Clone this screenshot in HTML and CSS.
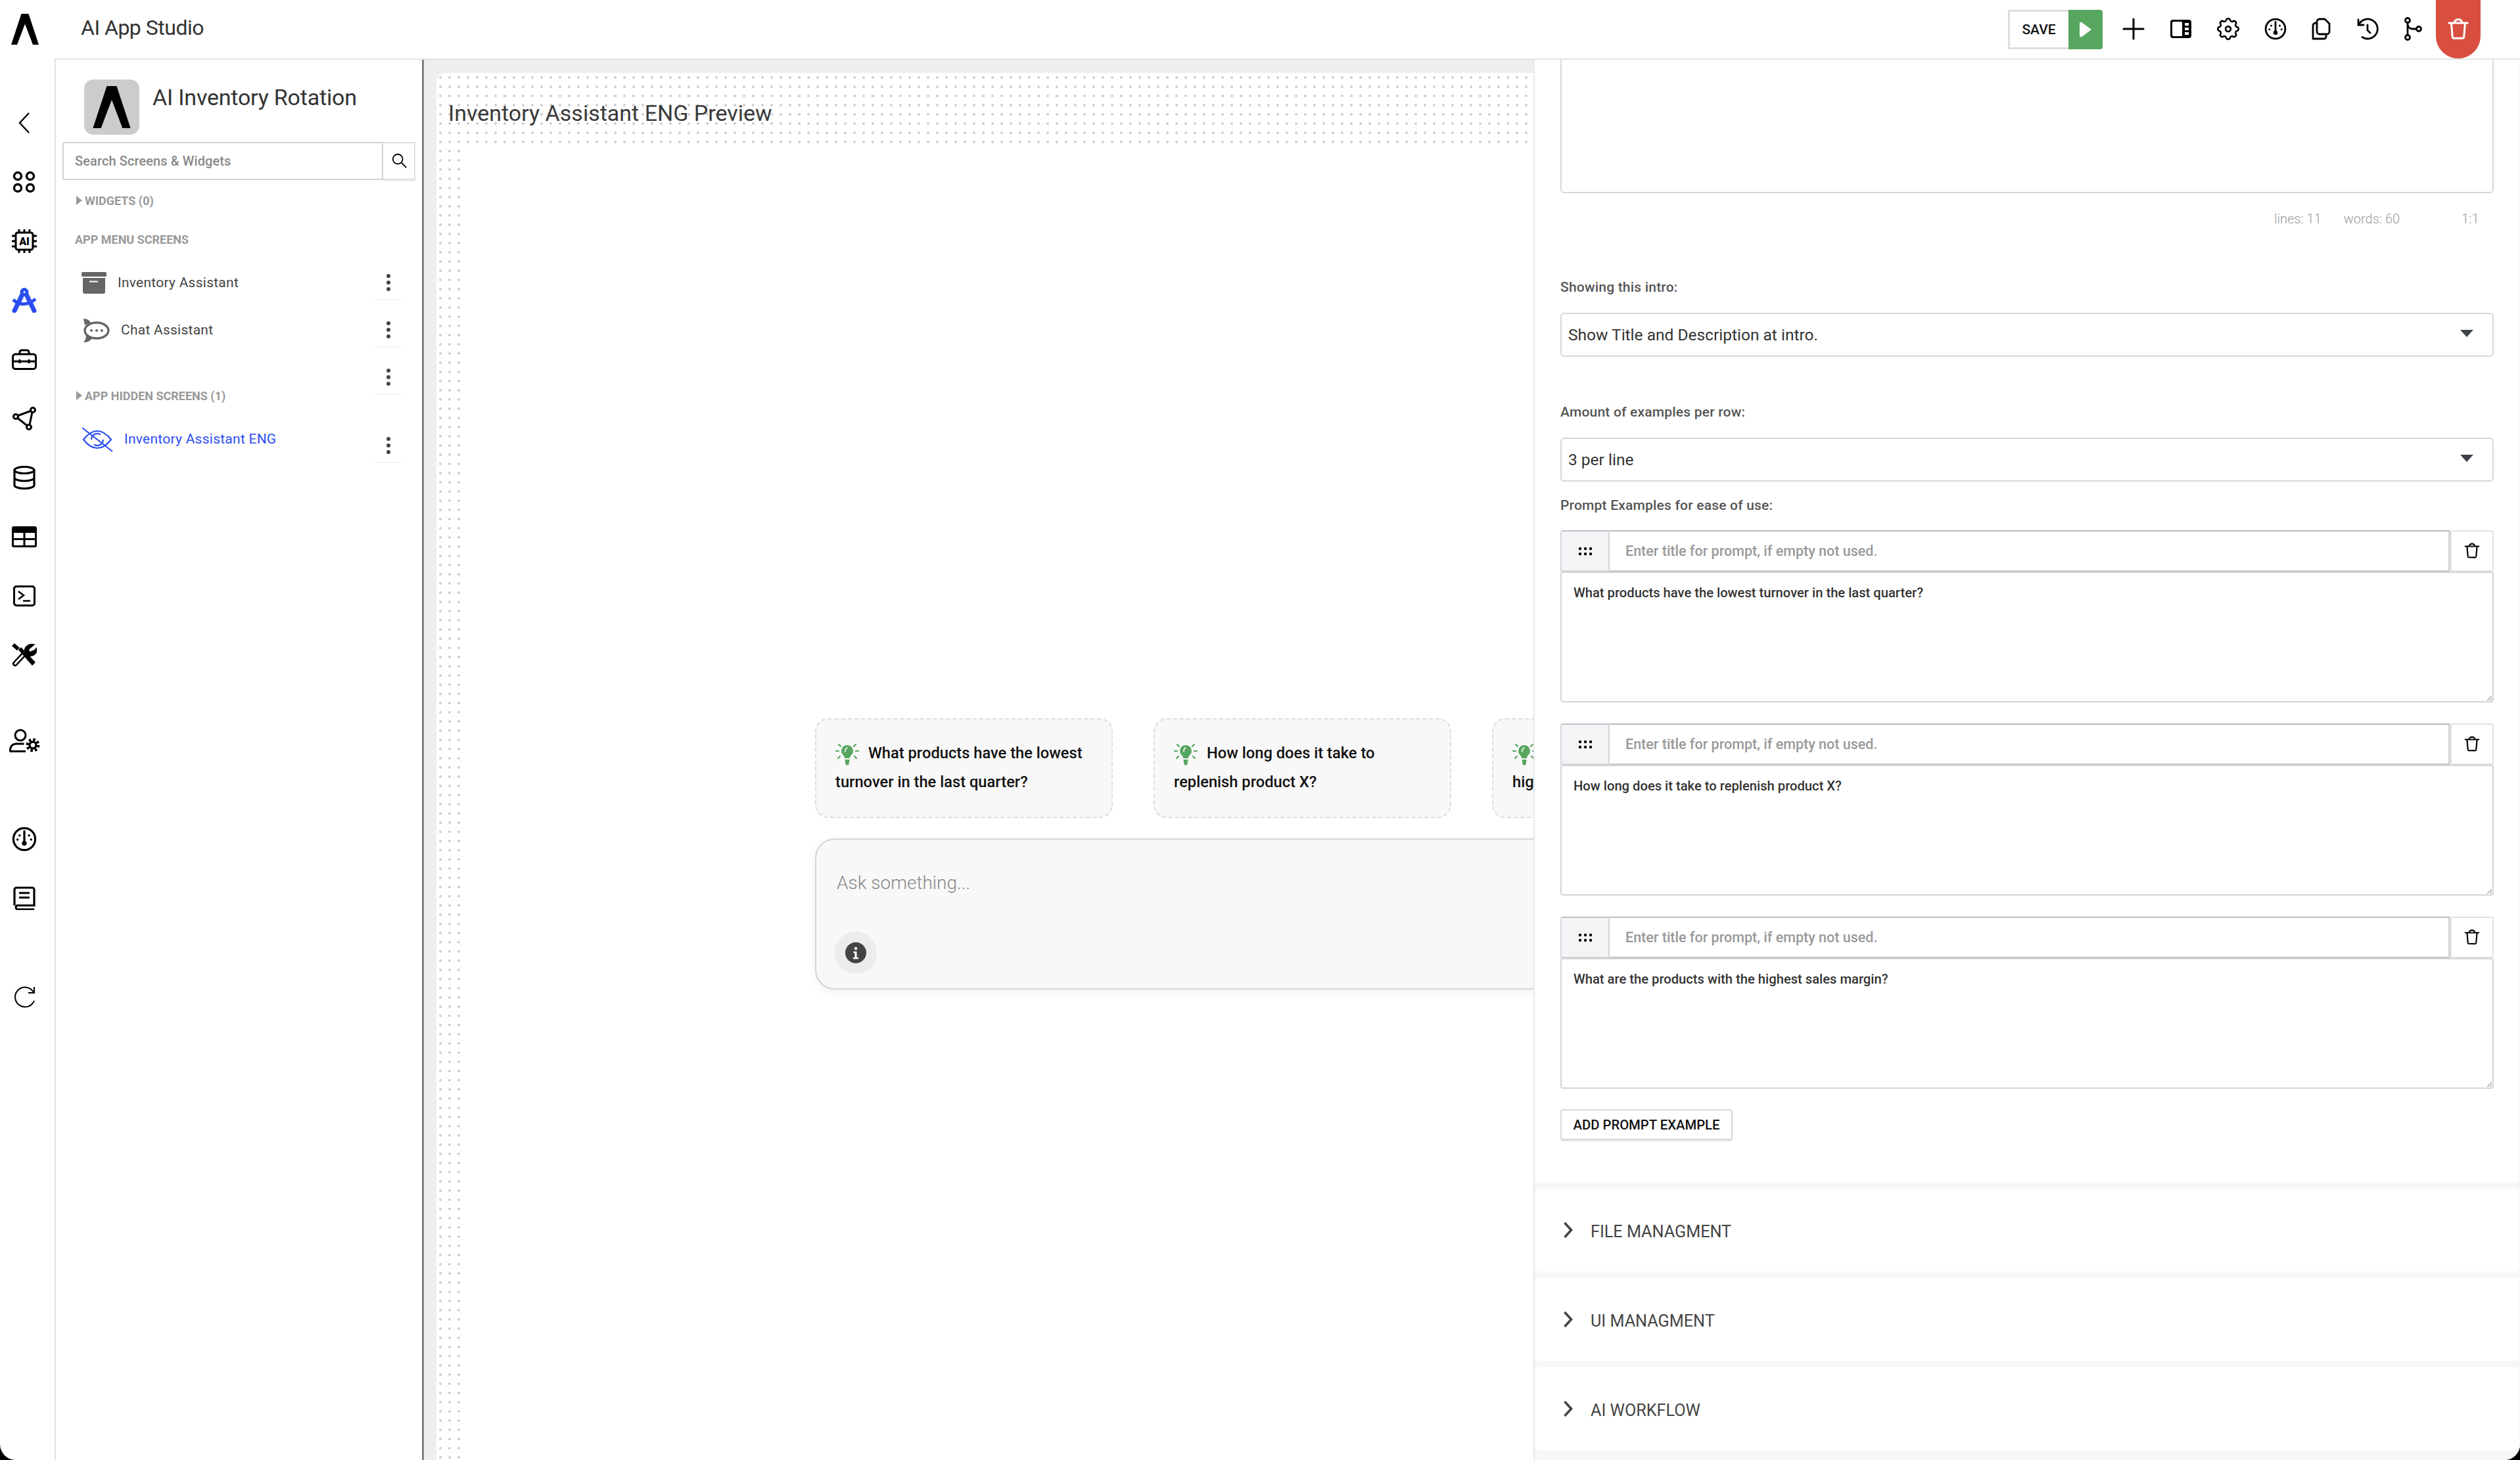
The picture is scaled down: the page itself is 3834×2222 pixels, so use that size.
FILE: index.html
```html
<!DOCTYPE html>

<html>

<head>

    <title>AI App Studio</title>

    <meta charset="utf-8">

    <link rel="stylesheet" href="styles.css">

</head>

<body>

    <svg class="sprites" width="0" height="0">
        <symbol id="i-dots" viewBox="0 0 8 32">
            <circle cx="4" cy="6" r="3"/>
            <circle cx="4" cy="16" r="3"/>
            <circle cx="4" cy="26" r="3"/>
        </symbol>
        <symbol id="i-trash" viewBox="0 0 24 24">
            <path d="M2.5 6h19M5 6l1.2 14.2a1.6 1.6 0 0 0 1.6 1.3h8.4a1.6 1.6 0 0 0 1.6-1.3L19 6M8 6a4 3.6 0 0 1 8 0" fill="none" stroke="currentColor" stroke-width="2" stroke-linecap="round" stroke-linejoin="round"/>
        </symbol>
        <symbol id="i-handle" viewBox="0 0 22 14">
            <circle cx="3" cy="3" r="2.2"/><circle cx="11" cy="3" r="2.2"/><circle cx="19" cy="3" r="2.2"/>
            <circle cx="3" cy="11" r="2.2"/><circle cx="11" cy="11" r="2.2"/><circle cx="19" cy="11" r="2.2"/>
        </symbol>
        <symbol id="i-bulb" viewBox="0 0 36 38">
            <path d="M18 5a9 9 0 0 0-6 15.6c1.4 1.4 2 2.8 2.2 4.4h7.6c.2-1.6.8-3 2.2-4.4A9 9 0 0 0 18 5z" fill="#57a660"/>
            <path d="M14.4 27h7.2l-1 6a2.6 2.6 0 0 1-5.2 0z" fill="#57a660"/>
            <path d="M15 15c-.3-3 1-5 3-6" fill="none" stroke="#fff" stroke-width="1.6" stroke-linecap="round"/>
            <path d="M5 4l3 3M31 4l-3 3M1 14h4M31 14h4M4 25l3-3M32 25l-3-3" fill="none" stroke="#57a660" stroke-width="2.2" stroke-linecap="round"/>
        </symbol>
        <symbol id="i-chevron" viewBox="0 0 16 26">
            <path d="M2.5 2l10 11-10 11" fill="none" stroke="#444" stroke-width="3.6"/>
        </symbol>
        <symbol id="i-gauge" viewBox="0 0 24 24">
            <circle cx="12" cy="12" r="10.5" fill="none" stroke="#000" stroke-width="2"/>
            <path d="M12 4.5v10" stroke="#000" stroke-width="2" stroke-linecap="round"/>
            <circle cx="12" cy="16" r="2.3"/>
            <circle cx="7.5" cy="8.5" r="1.1"/><circle cx="16.5" cy="8.5" r="1.1"/>
            <circle cx="5.5" cy="12.5" r="1.1"/><circle cx="18.5" cy="12.5" r="1.1"/>
        </symbol>
        <symbol id="i-logo" viewBox="0 0 42 47">
            <path d="M15.500 0h11L42 47H33L21 15.500 9 47H0z"/>
        </symbol>
    </svg>

    <div class="app">

        <nav class="rail">
            <div class="rail-logo">
                <svg width="42" height="47"><use href="#i-logo"/></svg>
            </div>

            <div class="rail-group first">
                <div class="rail-item">
                    <svg width="20" height="34" viewBox="0 0 20 34"><path d="M17 2L3 17l14 15" fill="none" stroke="#000" stroke-width="2.4"/></svg>
                </div>
                <div class="rail-item">
                    <svg width="36" height="34" viewBox="0 0 36 34" fill="none" stroke="#000" stroke-width="3.4">
                        <circle cx="8" cy="8" r="5.5"/><circle cx="27" cy="8" r="5.5"/>
                        <circle cx="8" cy="26" r="5.5"/><circle cx="27" cy="26" r="5.5"/>
                    </svg>
                </div>
                <div class="rail-item">
                    <svg width="40" height="36" viewBox="0 0 40 36">
                        <rect x="7" y="5" width="26" height="26" rx="3" fill="none" stroke="#000" stroke-width="3"/>
                        <path d="M12 0v5M20 0v5M28 0v5M12 31v5M20 31v5M28 31v5M1 10h6M1 18h6M1 26h6M33 10h6M33 18h6M33 26h6" stroke="#000" stroke-width="3"/>
                        <text class="chip-text" x="20" y="24" text-anchor="middle">AI</text>
                    </svg>
                </div>
                <div class="rail-item">
                    <svg width="38" height="38" viewBox="0 0 38 38" fill="none" stroke="#2b4ef0">
                        <circle cx="19" cy="6.5" r="4" stroke-width="5"/>
                        <path d="M15.500 11L4 35M22.500 11L34 35" stroke-width="7" stroke-linecap="round"/>
                        <path d="M2 18c10 10 24 8 34-1" stroke-width="5"/>
                    </svg>
                </div>
                <div class="rail-item">
                    <svg width="38" height="32" viewBox="0 0 38 32" fill="none" stroke="#000" stroke-width="3">
                        <rect x="1.5" y="8" width="35" height="22.5" rx="4"/>
                        <path d="M12 8V5a3 3 0 0 1 3-3h8a3 3 0 0 1 3 3v3M1.5 19h35"/>
                        <path d="M12 16v6M26 16v6"/>
                    </svg>
                </div>
                <div class="rail-item">
                    <svg width="36" height="36" viewBox="0 0 36 36" fill="none" stroke="#000" stroke-width="3">
                        <circle cx="5" cy="15" r="3.5"/><circle cx="31" cy="5" r="3.5"/><circle cx="25" cy="31" r="3.5"/>
                        <path d="M8.500 13.500L27.500 6.500M8 17.500L22 28.500M30 8.500L26 27.500"/>
                    </svg>
                </div>
                <div class="rail-item">
                    <svg width="34" height="36" viewBox="0 0 34 36" fill="none" stroke="#000" stroke-width="3.2">
                        <ellipse cx="17" cy="6.5" rx="15" ry="5"/>
                        <path d="M2 6.500v23c0 2.800 6.700 5 15 5s15-2.200 15-5v-23M2 18c0 2.800 6.700 5 15 5s15-2.200 15-5"/>
                    </svg>
                </div>
                <div class="rail-item">
                    <svg width="38" height="32" viewBox="0 0 38 32">
                        <rect width="38" height="32" rx="3"/>
                        <path d="M3 10h14.500v8H3zM20.500 10H35v8H20.500zM3 21h14.500v8H3zM20.500 21H35v8H20.500z" fill="#fff"/>
                    </svg>
                </div>
                <div class="rail-item">
                    <svg width="34" height="32" viewBox="0 0 34 32" fill="none" stroke="#000" stroke-width="3">
                        <rect x="1.5" y="1.5" width="31" height="29" rx="3.5"/>
                        <path d="M8 9l8 6-8 6M15 23.500h11" stroke-width="2.6"/>
                    </svg>
                </div>
                <div class="rail-item">
                    <svg width="38" height="36" viewBox="0 0 38 36">
                        <path d="M5 31L20 15" fill="none" stroke="#000" stroke-width="8" stroke-linecap="round"/>
                        <path d="M5 31L20 15" fill="none" stroke="#fff" stroke-width="3" stroke-linecap="round"/>
                        <path d="M20 14c-2-8 5-14 14-12l-6 5 1 4 4 1 5-5c1 8-5 14-13 12z" stroke="#000" stroke-width="1.5"/>
                        <path d="M26 10l3-3 2 4-3 2z" fill="#fff"/>
                        <path d="M0 4l4-4 8 7-4 4zM10 10l4-4 22 23-5 5z"/>
                    </svg>
                </div>
            </div>

            <div class="rail-group account">
                <div class="rail-item">
                    <svg width="47" height="36" viewBox="0 0 47 36" fill="none" stroke="#000" stroke-width="3">
                        <circle cx="17" cy="10" r="8"/>
                        <path d="M1.500 35v-3a9 9 0 0 1 9-9h12M1 34.500h24"/>
                        <circle cx="36" cy="25" r="8" stroke-width="5" stroke-dasharray="3.4 2.88"/>
                        <circle cx="36" cy="25" r="5" stroke-width="3.4"/>
                    </svg>
                </div>
            </div>

            <div class="rail-group docs">
                <div class="rail-item">
                    <svg width="38" height="38"><use href="#i-gauge"/></svg>
                </div>
                <div class="rail-item">
                    <svg width="34" height="36" viewBox="0 0 34 36" fill="none" stroke="#000" stroke-width="3.2">
                        <path d="M2 29V5a3 3 0 0 1 3-3h24a3 3 0 0 1 3 3v24H6a4 3.500 0 0 0 0 6h26"/>
                        <path d="M9 10h16M9 17h16"/>
                    </svg>
                </div>
            </div>

            <div class="rail-group reload">
                <div class="rail-item">
                    <svg width="34" height="34" viewBox="0 0 34 34" fill="none" stroke="#000" stroke-width="2">
                        <path d="M32 2v9H23M31 10A15 15 0 1 0 32 23"/>
                    </svg>
                </div>
            </div>
        </nav>

        <div class="main">

            <header class="topbar">
                <div class="topbar-title">AI App Studio</div>

                <div class="topbar-tools">
                    <div class="save-btn">
                        <span class="save-label">SAVE</span>
                        <span class="save-run">
                            <svg width="20" height="24" viewBox="0 0 20 24"><path d="M1 2.500a2 2 0 0 1 3.200-1.400L19 12 4.200 22.900A2 2 0 0 1 1 21.500z" fill="#fff"/></svg>
                        </span>
                    </div>

                    <div class="tool-btn">
                        <svg width="34" height="34" viewBox="0 0 34 34"><path d="M17 2v30M2 17h30" stroke="#000" stroke-width="3" stroke-linecap="round"/></svg>
                    </div>
                    <div class="tool-btn">
                        <svg width="32" height="28" viewBox="0 0 32 28">
                            <rect width="32" height="28" rx="4"/>
                            <rect x="3" y="3" width="15" height="22" rx="1.5" fill="#fff"/>
                            <path d="M22 5h6v4h-6zM22 12h6v4h-6zM22 19h6v4h-6z" fill="#fff"/>
                        </svg>
                    </div>
                    <div class="tool-btn">
                        <svg width="42" height="42" viewBox="0 0 24 24" fill="none" stroke="#000" stroke-width="1.5">
                            <path d="M10.325 4.317c.426 -1.756 2.924 -1.756 3.350 0a1.724 1.724 0 0 0 2.573 1.066c1.543 -.94 3.310 .826 2.370 2.370a1.724 1.724 0 0 0 1.065 2.572c1.756 .426 1.756 2.924 0 3.350a1.724 1.724 0 0 0 -1.066 2.573c.94 1.543 -.826 3.310 -2.370 2.370a1.724 1.724 0 0 0 -2.572 1.065c-.426 1.756 -2.924 1.756 -3.350 0a1.724 1.724 0 0 0 -2.573 -1.066c-1.543 .94 -3.310 -.826 -2.370 -2.370a1.724 1.724 0 0 0 -1.065 -2.572c-1.756 -.426 -1.756 -2.924 0 -3.350a1.724 1.724 0 0 0 1.066 -2.573c-.94 -1.543 .826 -3.310 2.370 -2.370c1 .608 2.296 .07 2.572 -1.065z"/>
                            <circle cx="12" cy="12" r="2.2"/>
                        </svg>
                    </div>
                    <div class="tool-btn">
                        <svg width="34" height="34"><use href="#i-gauge"/></svg>
                    </div>
                    <div class="tool-btn tight">
                        <svg width="30" height="34" viewBox="0 0 30 34" fill="none" stroke="#000" stroke-width="2.8" stroke-linejoin="round">
                            <path d="M12 2h8l7 7v12a4 4 0 0 1-4 4H12a4 4 0 0 1-4-4V6a4 4 0 0 1 4-4z"/>
                            <path d="M8 8H6a4 4 0 0 0-4 4v20h17a3 3 0 0 0 3-3v-4"/>
                        </svg>
                    </div>
                    <div class="tool-btn tight">
                        <svg width="34" height="34" viewBox="0 0 34 34" fill="none" stroke="#000" stroke-width="2.8" stroke-linecap="round">
                            <path d="M3 3v8h8M4 10A15 15 0 1 1 9 29.500M17 11v8l4 4"/>
                        </svg>
                    </div>
                    <div class="tool-btn tight">
                        <svg width="28" height="36" viewBox="0 0 28 36" fill="none" stroke="#000" stroke-width="2.8">
                            <circle cx="6" cy="5" r="3.5"/><circle cx="6" cy="31" r="3.5"/><circle cx="23" cy="18" r="3.5"/>
                            <path d="M6 8.500v19M6 10c0 5 3 8 8 8h5.500"/>
                        </svg>
                    </div>

                    <div class="delete-tab">
                        <svg width="36" height="38"><use href="#i-trash"/></svg>
                    </div>
                </div>
            </header>

            <div class="body">

                <aside class="sidebar">
                    <div class="app-head">
                        <div class="app-badge">
                            <svg width="62" height="64"><use href="#i-logo"/></svg>
                        </div>
                        <div class="app-name">AI Inventory Rotation</div>
                    </div>

                    <div class="search">
                        <input class="search-input" type="text" placeholder="Search Screens &amp; Widgets">
                        <div class="search-btn">
                            <svg width="24" height="24" viewBox="0 0 26 26" fill="none" stroke="#000" stroke-width="2"><circle cx="11" cy="11" r="8"/><path d="M17 17l8 8"/></svg>
                        </div>
                    </div>

                    <div class="tree-head caret widgets-head">WIDGETS (0)</div>
                    <div class="tree-head menu-head">APP MENU SCREENS</div>

                    <div class="tree-row archive-row">
                        <svg class="tree-icon" width="38" height="34" viewBox="0 0 38 34">
                            <rect width="38" height="7" rx="2" fill="#666"/>
                            <path d="M2 9h34v21a3 3 0 0 1-3 3H5a3 3 0 0 1-3-3z" fill="#666"/>
                            <path d="M12 14.500h13" stroke="#fff" stroke-width="2"/>
                        </svg>
                        <span class="tree-label">Inventory Assistant</span>
                        <span class="more-btn"><svg width="8" height="32"><use href="#i-dots"/></svg></span>
                    </div>

                    <div class="tree-row chat-row">
                        <svg class="tree-icon" width="43" height="38" viewBox="0 0 43 38" fill="none" stroke="#666" stroke-width="3.4">
                            <ellipse cx="23" cy="19" rx="18" ry="12"/>
                            <path d="M3 1c5 0 9 2 11 6L5 11zM3 37c3-3 4-7 4-11l9 5c-3 4-7 6-13 6z" fill="#666" stroke="none"/>
                            <g fill="#666" stroke="none"><circle cx="15" cy="19" r="2"/><circle cx="23" cy="19" r="2"/><circle cx="31" cy="19" r="2"/></g>
                        </svg>
                        <span class="tree-label">Chat Assistant</span>
                        <span class="more-btn"><svg width="8" height="32"><use href="#i-dots"/></svg></span>
                    </div>

                    <div class="tree-row empty-row">
                        <span class="more-btn"><svg width="8" height="32"><use href="#i-dots"/></svg></span>
                    </div>

                    <div class="tree-head caret hidden-head">APP HIDDEN SCREENS (1)</div>

                    <div class="tree-row hidden-row">
                        <svg class="tree-icon" width="48" height="38" viewBox="0 0 48 38" fill="none" stroke="#2b4ef0" stroke-width="2.2">
                            <path d="M3 19C10 10 17 6 24 6s14 4 21 13c-7 9-14 13-21 13S10 28 3 19z"/>
                            <path d="M15 19a9 9 0 0 1 14-7.500M33 19a9 9 0 0 1-14 7.500"/>
                            <path d="M1 1l46 36"/>
                        </svg>
                        <span class="tree-label active">Inventory Assistant ENG</span>
                        <span class="more-btn"><svg width="8" height="32"><use href="#i-dots"/></svg></span>
                    </div>
                </aside>

                <div class="workspace">
                    <section class="canvas">
                        <div class="canvas-title">Inventory Assistant ENG Preview</div>

                        <div class="sheet">
                            <div class="examples">
                                <div class="example">
                                    <svg class="bulb" width="36" height="38"><use href="#i-bulb"/></svg>What products have the lowest turnover in the last quarter?
                                </div>
                                <div class="example">
                                    <svg class="bulb" width="36" height="38"><use href="#i-bulb"/></svg>How long does it take to replenish product X?
                                </div>
                                <div class="example">
                                    <svg class="bulb" width="36" height="38"><use href="#i-bulb"/></svg>What are the products with the highest sales margin?
                                </div>
                            </div>

                            <div class="ask">
                                <div class="ask-text">Ask something...</div>
                                <div class="info-btn">
                                    <svg width="32" height="32" viewBox="0 0 32 32">
                                        <circle cx="16" cy="16" r="16" fill="#444"/>
                                        <circle cx="16" cy="9.5" r="2.2" fill="#fff"/>
                                        <path d="M12.500 14h5v9h2.500v2.500h-8V23h2.500v-6.500h-2z" fill="#fff"/>
                                    </svg>
                                </div>
                            </div>
                        </div>
                    </section>

                    <section class="panel">
                        <div class="panel-block">
                            <div class="intro-box"></div>

                            <div class="stats">
                                <span class="stat-lines">lines: 11</span>
                                <span class="stat-words">words: 60</span>
                                <span class="stat-pos">1:1</span>
                            </div>

                            <div class="field-label intro-label">Showing this intro:</div>
                            <div class="select-wrap">
                                <select class="select">
                                    <option>Show Title and Description at intro.</option>
                                </select>
                            </div>

                            <div class="field-label per-row-label">Amount of examples per row:</div>
                            <div class="select-wrap">
                                <select class="select">
                                    <option>3 per line</option>
                                </select>
                            </div>

                            <div class="field-label prompts-label">Prompt Examples for ease of use:</div>

                            <div class="prompts">
                                <div class="prompt">
                                    <div class="prompt-head">
                                        <span class="prompt-handle"><svg width="22" height="14"><use href="#i-handle"/></svg></span>
                                        <input class="prompt-title" type="text" placeholder="Enter title for prompt, if empty not used.">
                                        <span class="prompt-delete"><svg width="26" height="28"><use href="#i-trash"/></svg></span>
                                    </div>
                                    <textarea class="prompt-text" readonly>What products have the lowest turnover in the last quarter?</textarea>
                                </div>

                                <div class="prompt">
                                    <div class="prompt-head">
                                        <span class="prompt-handle"><svg width="22" height="14"><use href="#i-handle"/></svg></span>
                                        <input class="prompt-title" type="text" placeholder="Enter title for prompt, if empty not used.">
                                        <span class="prompt-delete"><svg width="26" height="28"><use href="#i-trash"/></svg></span>
                                    </div>
                                    <textarea class="prompt-text" readonly>How long does it take to replenish product X?</textarea>
                                </div>

                                <div class="prompt">
                                    <div class="prompt-head">
                                        <span class="prompt-handle"><svg width="22" height="14"><use href="#i-handle"/></svg></span>
                                        <input class="prompt-title" type="text" placeholder="Enter title for prompt, if empty not used.">
                                        <span class="prompt-delete"><svg width="26" height="28"><use href="#i-trash"/></svg></span>
                                    </div>
                                    <textarea class="prompt-text" readonly>What are the products with the highest sales margin?</textarea>
                                </div>
                            </div>

                            <button class="add-btn" type="button">ADD PROMPT EXAMPLE</button>
                        </div>

                        <div class="acc-row"><svg width="16" height="26"><use href="#i-chevron"/></svg><span>FILE MANAGMENT</span></div>
                        <div class="acc-row"><svg width="16" height="26"><use href="#i-chevron"/></svg><span>UI MANAGMENT</span></div>
                        <div class="acc-row"><svg width="16" height="26"><use href="#i-chevron"/></svg><span>AI WORKFLOW</span></div>
                    </section>
                </div>

            </div>

        </div>

    </div>

</body>

</html>
```

FILE: styles.css
```css
* {
    margin: 0;
    padding: 0;
    box-sizing: border-box;
}

html,
body {
    height: 100%;
}

body {
    background: #000;
    color: #333;
    font-family: "Roboto", "Liberation Sans", sans-serif;
    overflow: hidden;
}

input,
select,
textarea,
button {
    font-family: inherit;
}

.sprites {
    display: block;
    height: 0;
}

.app {
    background: #fff;
    border-radius: 0 0 24px 24px;
    display: flex;
    height: 2222px;
    overflow: hidden;
    width: 3834px;
}



/* left icon rail */

.rail {
    flex: 0 0 83px;
}

.rail-logo {
    align-items: center;
    display: flex;
    height: 88px;
    padding-left: 17px;
}

.rail-group.first {
    margin-top: 54px;
}

.rail-group.account {
    margin-top: 40px;
}

.rail-group.docs,
.rail-group.reload {
    margin-top: 60px;
}

.rail-item {
    align-items: center;
    display: flex;
    height: 90px;
    justify-content: center;
    width: 74px;
}

.chip-text {
    font-size: 16px;
    font-weight: 900;
}



.main {
    display: flex;
    flex: 1;
    flex-direction: column;
    min-width: 0;
}



/* top bar */

.topbar {
    border-bottom: 2px solid #e4e4e4;
    display: flex;
    flex: 0 0 90px;
    justify-content: space-between;
}

.topbar-title {
    color: #333;
    font-size: 32px;
    letter-spacing: -0.5px;
    line-height: 84px;
    padding-left: 40px;
}

.topbar-tools {
    display: flex;
    padding-right: 60px;
}

.save-btn {
    display: flex;
    height: 60px;
    margin: 15px 11px 0 0;
}

.save-label {
    border: 3px solid #ddd;
    border-right: 0;
    color: #111;
    font-size: 21px;
    font-weight: 500;
    line-height: 54px;
    text-align: center;
    width: 92px;
}

.save-run {
    align-items: center;
    background: #57a660;
    border-radius: 0 4px 4px 0;
    display: flex;
    justify-content: center;
    width: 52px;
}

.tool-btn {
    align-items: center;
    display: flex;
    height: 88px;
    justify-content: center;
    width: 72px;
}

.tool-btn.tight {
    width: 69.5px;
}

.delete-tab {
    align-items: center;
    background: #d94f3f;
    border-radius: 0 0 34px 34px;
    color: #fff;
    display: flex;
    height: 89px;
    justify-content: center;
    padding-bottom: 1px;
    width: 68px;
}



.body {
    display: flex;
    flex: 1;
    min-height: 0;
}



/* screens sidebar */

.sidebar {
    border-left: 2px solid #e2e2e2;
    border-right: 3px solid #808080;
    flex: 0 0 562px;
    padding-top: 30px;
}

.app-head {
    display: flex;
    padding-left: 43px;
}

.app-badge {
    align-items: center;
    background: #ccc;
    border-radius: 14px;
    display: flex;
    height: 84px;
    justify-content: center;
    width: 84px;
}

.app-name {
    color: #333;
    font-size: 34px;
    letter-spacing: -0.2px;
    line-height: 54px;
    padding-left: 20px;
}

.search {
    display: flex;
    height: 58px;
    margin: 11px 0 0 10px;
    width: 537px;
}

.search-input {
    border: 2px solid #d4d4d8;
    border-radius: 3px 0 0 3px;
    flex: 1;
    font-size: 20px;
    font-weight: 500;
    letter-spacing: 0.1px;
    padding-left: 17px;
}

.search-input::placeholder {
    color: #888;
}

.search-btn {
    align-items: center;
    border: 2px solid #e0e0e0;
    border-left: 0;
    box-shadow: 0 2px 0 #eee;
    display: flex;
    justify-content: center;
    padding-bottom: 2px;
    width: 49px;
}

.tree-head {
    color: #999;
    font-size: 18px;
    font-weight: 700;
    line-height: 24px;
    padding-left: 29px;
}

.tree-head.caret {
    padding-left: 44px;
    position: relative;
}

.tree-head.caret::before {
    border-bottom: 7px solid transparent;
    border-left: 9px solid #999;
    border-top: 7px solid transparent;
    content: "";
    left: 31px;
    position: absolute;
    top: 4px;
}

.widgets-head {
    margin-top: 20px;
}

.menu-head {
    margin-top: 35px;
}

.hidden-head {
    margin-top: -14px;
}

.tree-row {
    align-items: center;
    display: flex;
    height: 60px;
    padding-left: 39px;
    width: 527px;
}

.tree-icon {
    flex: none;
}

.tree-label {
    color: #444;
    flex: 1;
    font-size: 21px;
    letter-spacing: 0.25px;
    padding: 0 0 3px 17px;
}

.tree-label.active {
    color: #2b4ef0;
}

.more-btn {
    align-items: center;
    border-bottom: 2px solid #f2f2f2;
    border-radius: 0 0 4px 4px;
    color: #444;
    display: flex;
    fill: #444;
    height: 52px;
    justify-content: center;
    width: 42px;
}

.empty-row {
    justify-content: flex-end;
    margin-top: 12px;
}

.archive-row {
    margin-top: 24px;
}

.chat-row {
    margin-top: 12px;
}

.hidden-row {
    margin-top: 24px;
}

.hidden-row .more-btn {
    margin-top: 20px;
}



/* preview canvas */

.workspace {
    background: #eee;
    display: flex;
    flex: 1;
    min-width: 0;
    padding-left: 19px;
}

.canvas {
    background-color: #fff;
    background-image: radial-gradient(circle, #ccc 1.5px, transparent 2.2px);
    background-position: -1px 0;
    background-size: 14px 14px;
    border-radius: 14px 0 0 0;
    display: flex;
    flex: 1;
    flex-direction: column;
    margin-top: 20px;
    min-width: 0;
    overflow: hidden;
}

.canvas-title {
    color: #3a3a3a;
    flex: 0 0 107px;
    font-size: 34px;
    line-height: 42px;
    padding: 40px 0 0 18px;
}

.sheet {
    background: #fff;
    border-radius: 16px 0 0 0;
    flex: 1;
    margin-left: 43px;
    padding: 875px 0 0 533px;
    width: 1626px;
}

.examples {
    display: flex;
    gap: 62px;
}

.example {
    background: #f8f8f8;
    border: 2px dashed #ddd;
    border-radius: 20px;
    color: #111;
    flex: 0 0 453px;
    font-size: 23.7px;
    font-weight: 500;
    height: 152px;
    line-height: 44px;
    padding: 29px 29px 0;
}

.bulb {
    margin: -5px 14px -5px 0;
    vertical-align: -8px;
}

.ask {
    background: #f8f8f8;
    border: 2px solid #d4d4d8;
    border-radius: 30px;
    box-shadow: 0 4px 14px rgba(0, 0, 0, 0.06);
    height: 230px;
    margin-top: 31px;
    padding: 48px 0 0 31px;
    width: 1400px;
}

.ask-text {
    color: #888;
    font-size: 28px;
    font-weight: 300;
    line-height: 36px;
}

.info-btn {
    align-items: center;
    background: #ececec;
    border-radius: 50%;
    display: flex;
    height: 64px;
    justify-content: center;
    margin: 56px 0 0 -3px;
    width: 64px;
}



/* right settings panel */

.panel {
    background: #f7f7f7;
    border-left: 2px solid #e8e8e8;
    display: flex;
    flex: 0 0 1501px;
    flex-direction: column;
    gap: 10px;
    padding-right: 1px;
}

.panel-block {
    background: #fff;
    border-radius: 0 0 6px 6px;
    flex: 0 0 1708px;
    padding: 0 39px;
}

.intro-box {
    border: 2px solid #d4d8de;
    border-radius: 0 0 6px 6px;
    border-top: 0;
    height: 203px;
}

.stats {
    color: #999;
    display: flex;
    font-size: 20px;
    font-weight: 300;
    line-height: 24px;
    margin-top: 27px;
}

.stat-lines {
    margin-left: 1086px;
}

.stat-words {
    margin-left: 34px;
}

.stat-pos {
    margin-left: 94px;
}

.field-label {
    color: #555;
    font-size: 21px;
    font-weight: 500;
    letter-spacing: 0.2px;
    line-height: 24px;
}

.intro-label {
    margin: 80px 0 27px;
}

.per-row-label {
    margin: 72px 0 27px;
}

.prompts-label {
    margin: 24px 0 26px;
}

.select-wrap {
    position: relative;
}

.select-wrap::after {
    border-left: 10px solid transparent;
    border-right: 10px solid transparent;
    border-top: 11px solid #3f4349;
    content: "";
    position: absolute;
    right: 31px;
    top: 26px;
}

.select {
    appearance: none;
    background: #fff;
    border: 2px solid #d4d8de;
    border-radius: 6px;
    color: #333;
    display: block;
    font-size: 24.5px;
    height: 67px;
    padding-left: 10px;
    width: 100%;
}

.prompts {
    display: flex;
    flex-direction: column;
    gap: 32px;
}

.prompt-head {
    display: flex;
    height: 63px;
}

.prompt-handle {
    align-items: center;
    background: #f3f4f6;
    border: 2px solid #d4d6da;
    border-radius: 4px 0 0 0;
    border-top-color: #bcc0c8;
    display: flex;
    flex: 0 0 75px;
    justify-content: center;
}

.prompt-title {
    border: 2px solid #c4c7ce;
    border-left: 0;
    border-right: 3px solid #d4d4d8;
    border-top-color: #b8bcc4;
    flex: 1;
    font-size: 21.5px;
    font-weight: 500;
    min-width: 0;
    padding-left: 24px;
}

.prompt-title::placeholder {
    color: #999;
}

.prompt-delete {
    align-items: center;
    border: 2px solid #e2e2e2;
    border-radius: 4px;
    color: #000;
    display: flex;
    flex: 0 0 66px;
    justify-content: center;
    padding-bottom: 2px;
}

.prompt-text {
    border: 2px solid #d4d4d8;
    border-radius: 4px;
    color: #333;
    display: block;
    font-size: 20.2px;
    font-weight: 500;
    height: 199px;
    padding: 18px;
    resize: vertical;
    width: 100%;
}

.add-btn {
    background: #fff;
    border: 2px solid #d9d9d9;
    border-radius: 4px;
    box-shadow: 0 2px 1px #e4e4e4;
    color: #111;
    display: block;
    font-size: 20.3px;
    font-weight: 500;
    height: 47px;
    margin-top: 31px;
    width: 262px;
}

.acc-row {
    align-items: center;
    background: #fff;
    border-radius: 6px;
    color: #444;
    display: flex;
    flex: 0 0 126px;
    font-size: 25.2px;
    gap: 26px;
    padding: 0 0 0 43px;
}

.acc-row span {
    padding-top: 4px;
}
```
